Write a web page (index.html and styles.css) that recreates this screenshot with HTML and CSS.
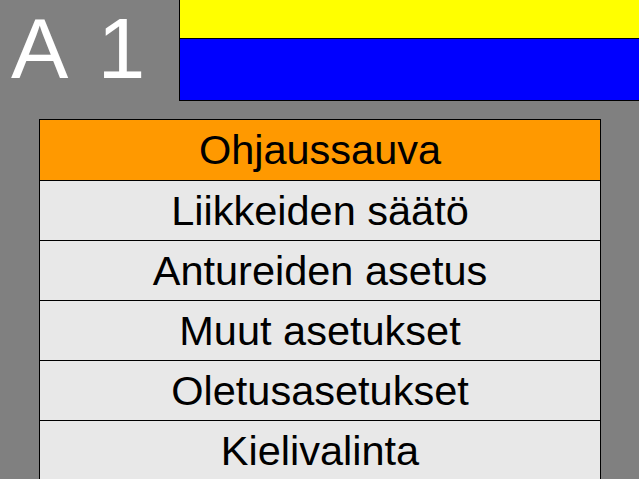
FILE: index.html
```html
<!DOCTYPE html>
<html>
<head>
<meta charset="utf-8">
<link rel="stylesheet" href="styles.css">
</head>
<body>
<div class="header">
  <div class="title">A 1</div>
  <div class="banner">
    <div class="yellow"></div>
    <div class="blue"></div>
  </div>
</div>
<div class="menu">
  <div class="item active">Ohjaussauva</div>
  <div class="item">Liikkeiden säätö</div>
  <div class="item">Antureiden asetus</div>
  <div class="item">Muut asetukset</div>
  <div class="item">Oletusasetukset</div>
  <div class="item">Kielivalinta</div>
</div>
</body>
</html>
```
FILE: styles.css
```css
html, body {
  margin: 0;
  padding: 0;
  background: #808080;
  width: 639px;
  height: 479px;
  overflow: hidden;
  font-family: "Liberation Sans", Arial, sans-serif;
}
.header {
  display: flex;
  height: 101px;
}
.title {
  width: 179px;
  box-sizing: border-box;
  padding-left: 11px;
  color: #ffffff;
  font-size: 86px;
  line-height: 96px;
  word-spacing: 10px;
  white-space: pre;
}
.banner {
  flex: 1;
  display: flex;
  flex-direction: column;
  border-left: 1px solid #000;
  border-bottom: 1px solid #000;
}
.yellow {
  height: 38px;
  background: #ffff00;
  border-bottom: 1px solid #000;
}
.blue {
  flex: 1;
  background: #0000ff;
}
.menu {
  margin: 18px 0 0 39px;
  width: 562px;
  box-sizing: border-box;
  border: 1px solid #000;
  border-bottom: none;
}
.item {
  height: 59px;
  border-bottom: 1px solid #000;
  background: #e8e8e8;
  display: flex;
  align-items: center;
  justify-content: center;
  font-size: 41.5px;
  color: #000;
}
.item.active {
  height: 60px;
  background: #ff9900;
}
```
